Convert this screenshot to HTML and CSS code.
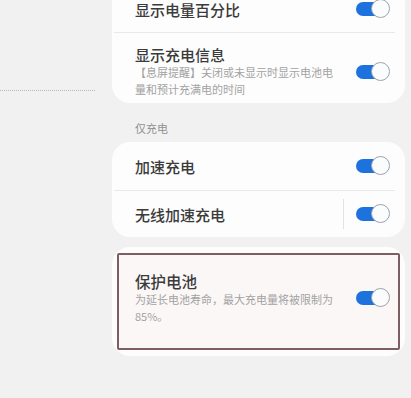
FILE: index.html
```html
<!DOCTYPE html>
<html>
<head>
<meta charset="utf-8">
<link rel="stylesheet" href="styles.css">
</head>
<body class="page">
  <div class="side">
    <div class="dots"></div>
  </div>
  <div class="main">
    <div class="card">
      <div class="row row_top">
        <div class="txt"><div class="title">显示电量百分比</div></div>
        <span class="sw"></span>
      </div>
      <div class="line"></div>
      <div class="row row_info">
        <div class="txt">
          <div class="title">显示充电信息</div>
          <div class="sub">【息屏提醒】关闭或未显示时显示电池电量和预计充满电的时间</div>
        </div>
        <span class="sw"></span>
      </div>
    </div>

    <div class="group">仅充电</div>

    <div class="card">
      <div class="row row_a">
        <div class="txt"><div class="title">加速充电</div></div>
        <span class="sw"></span>
      </div>
      <div class="line"></div>
      <div class="row row_b">
        <div class="txt"><div class="title">无线加速充电</div></div>
        <span class="vbar"></span>
        <span class="sw"></span>
      </div>
    </div>

    <div class="card card_last">
      <div class="mark">
        <div class="row row_mark">
          <div class="txt">
            <div class="title title_big">保护电池</div>
            <div class="sub">为延长电池寿命，最大充电量将被限制为85%。</div>
          </div>
          <span class="sw"></span>
        </div>
      </div>
    </div>
  </div>
</body>
</html>
```

FILE: styles.css
```css
.page
{
  margin:0;
  height:398px;
  overflow:hidden;
  background-color:#f1f1f1;
  display:flex;
  font-family:"Noto Sans CJK SC","Noto Sans",sans-serif;
}
.side
{
  width:112px;
  flex:none;
  padding-top:90px;
  box-sizing:border-box;
}
.dots
{
  width:95px;
  border-top:1px dotted #b9b9b9;
}
.main
{
  flex:1;
  margin-top:-14px;
  margin-right:6px;
}
.card
{
  background-color:#fdfdfd;
  border-radius:18px;
}
.card_last
{
  margin-top:10px;
  padding:6px 5px;
}
.row
{
  display:flex;
  align-items:center;
  padding-left:23px;
  padding-right:15px;
}
.row_top
{
  height:46px;
}
.row_info
{
  padding-top:12px;
  padding-bottom:5px;
}
.row_a
{
  height:48px;
}
.row_b
{
  height:46px;
}
.txt
{
  flex:1;
}
.title
{
  font-size:15px;
  line-height:19px;
  font-weight:500;
  color:#3b3b3b;
}
.title_big
{
  font-size:15.5px;
  line-height:20px;
}
.sub
{
  width:200px;
  font-size:11px;
  line-height:17px;
  color:#a2a2a2;
}
.line
{
  height:1px;
  margin-left:2px;
  margin-right:10px;
  background-color:#e9e9e9;
}
.group
{
  padding:18px 0 7px 23px;
  font-size:11px;
  line-height:14px;
  color:#929292;
}
.vbar
{
  width:1px;
  height:30px;
  margin-right:12px;
  background-color:#e2e2e2;
}
.mark
{
  border:2px solid #7d5e62;
  border-radius:2px;
  background-color:#fcf7f7;
}
.row_mark
{
  padding-left:16px;
  padding-right:8px;
  padding-top:16px;
  padding-bottom:23px;
}
.sw
{
  position:relative;
  flex:none;
  width:34px;
  height:20px;
}
.sw::before
{
  content:"";
  position:absolute;
  left:0;
  top:3px;
  width:28px;
  height:14px;
  border-radius:7px;
  background-color:#1d72dd;
}
.sw::after
{
  content:"";
  position:absolute;
  right:0;
  top:0;
  width:17px;
  height:17px;
  border-radius:50%;
  border:1.5px solid #9da3a8;
  background-color:#fafcfd;
}
```
